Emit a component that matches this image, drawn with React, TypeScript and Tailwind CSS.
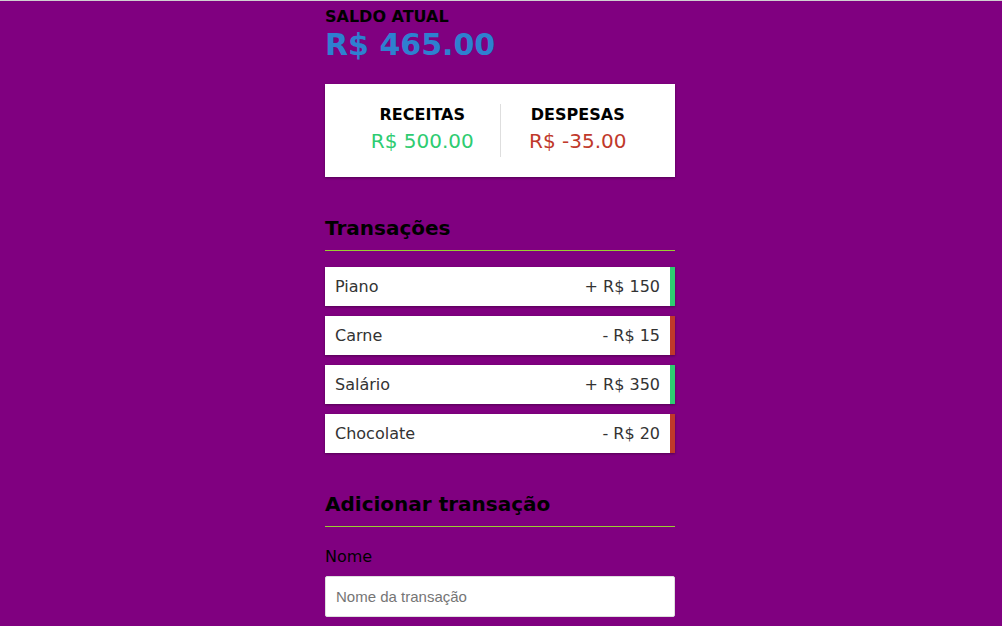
const transactions = [
  { id: 1, name: "Piano", amount: 150 },
  { id: 2, name: "Carne", amount: -15 },
  { id: 3, name: "Salário", amount: 350 },
  { id: 4, name: "Chocolate", amount: -20 },
];

const font = "font-['DejaVu_Sans',sans-serif]";

const App = () => {
  return (
    <div className={`min-h-screen bg-[#800080] border-t border-[#d0d0d0] pr-[2px] ${font}`}>
      <div className="w-[350px] mx-auto">
        {/* saldo */}
        <h4 className="pt-[6px] text-[16px] leading-[20px] font-bold uppercase text-black">
          Saldo atual
        </h4>
        <h1 className="text-[30px] leading-[36px] font-bold text-[#2e80d0]">
          R$ 465.00
        </h1>

        {/* receitas / despesas */}
        <div className="mt-[21px] bg-white p-5 flex shadow-[0_1px_3px_rgba(0,0,0,0.12),0_1px_2px_rgba(0,0,0,0.24)]">
          <div className="flex-1 text-center border-r border-[#dedede]">
            <h4 className="text-[16px] leading-[22px] font-bold uppercase text-black">Receitas</h4>
            <p className="text-[20px] leading-[31px] text-[#2ecc71]">R$ 500.00</p>
          </div>
          <div className="flex-1 text-center">
            <h4 className="text-[16px] leading-[22px] font-bold uppercase text-black">Despesas</h4>
            <p className="text-[20px] leading-[31px] text-[#c0392b]">R$ -35.00</p>
          </div>
        </div>

        {/* transações */}
        <h3 className="mt-[39px] pb-[10px] text-[20px] leading-[24px] font-bold text-black">
          Transações
        </h3>
        <div className="h-px bg-[#9acd32]" />
        <ul className="mt-[16px] flex flex-col gap-[10px]">
          {transactions.map((t) => (
            <li
              key={t.id}
              className={`bg-white flex justify-between px-[10px] py-[10px] text-[16px] leading-[19px] text-[#333] border-r-[5px] shadow-[0_1px_3px_rgba(0,0,0,0.12),0_1px_2px_rgba(0,0,0,0.24)] ${
                t.amount > 0 ? "border-[#2ecc71]" : "border-[#c0392b]"
              }`}
            >
              <span>{t.name}</span>
              <span>
                {t.amount > 0 ? "+" : "-"} R$ {Math.abs(t.amount)}
              </span>
            </li>
          ))}
        </ul>

        {/* adicionar */}
        <h3 className="mt-[39px] pb-[10px] text-[20px] leading-[24px] font-bold text-black">
          Adicionar transação
        </h3>
        <div className="h-px bg-[#9acd32]" />
        <label className="block mt-[20px] text-[16px] leading-[20px] text-black">Nome</label>
        <input
          type="text"
          placeholder="Nome da transação"
          className="mt-[9px] w-full h-[41px] px-[10px] bg-white border border-[#dedede] rounded-[2px] text-[15px] font-['Liberation_Sans',sans-serif] placeholder:text-[#757575] outline-none"
        />
      </div>
    </div>
  );
};

export default App;
